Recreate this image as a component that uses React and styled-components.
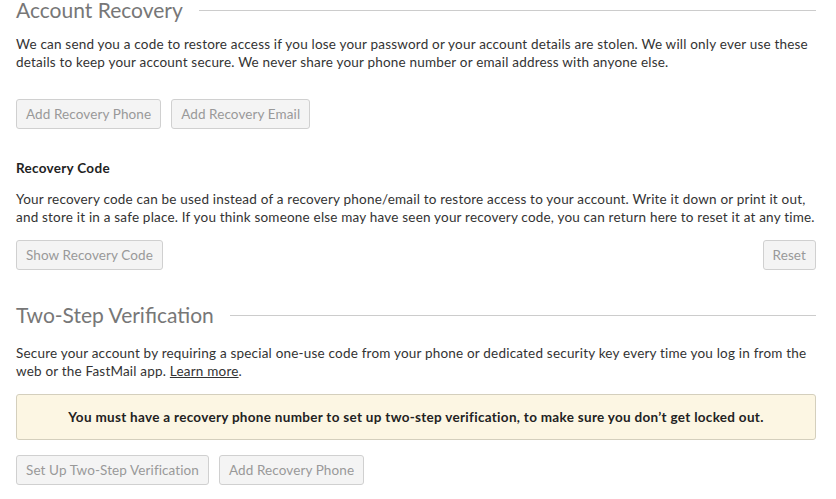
import React from "react";
import styled, { createGlobalStyle } from "styled-components";

const GlobalStyle = createGlobalStyle`
  body {
    margin: 0;
    background: #fff;
    font-family: Lato, "Liberation Sans", sans-serif;
    color: #333;
  }
`;

const Page = styled.div`
  width: 800px;
  padding: 0 20px 0 16px;
`;

const Section = styled.section`
  margin-bottom: ${(p) => p.$gap || 0}px;
`;

const HeaderRow = styled.div`
  display: flex;
  align-items: center;
  gap: 16px;
  height: 20px;
`;

const Title = styled.h2`
  margin: 0;
  font-size: 21px;
  line-height: 20px;
  font-weight: 400;
  color: #777;
  white-space: nowrap;
`;

const Rule = styled.div`
  flex: 1;
  height: 1px;
  background: #ccc;
`;

const Text = styled.p`
  margin: ${(p) => p.$top || 0}px 0 0;
  font-size: 13.5px;
  letter-spacing: 0.2px;
  line-height: 18px;
  color: #333;
`;

const SubTitle = styled.h3`
  margin: 0;
  font-size: 13.5px;
  letter-spacing: 0.3px;
  font-weight: 700;
  line-height: 18px;
  color: #222;
`;

const ButtonRow = styled.div`
  display: flex;
  gap: 10px;
  margin-top: ${(p) => p.$top || 0}px;
  justify-content: ${(p) => (p.$spread ? "space-between" : "flex-start")};
`;

const Group = styled.div`
  display: flex;
  gap: 10px;
`;

const Button = styled.button`
  height: 30px;
  padding: 0 9px;
  font-family: inherit;
  font-size: 13.5px;
  letter-spacing: 0.1px;
  color: #999;
  background: #f4f4f4;
  border: 1px solid #d0d0d0;
  border-radius: 3px;
`;

const LinkText = styled.a`
  color: #333;
  text-decoration: underline;
`;

const Notice = styled.div`
  margin-top: 14px;
  height: 46px;
  display: flex;
  align-items: center;
  justify-content: center;
  background: #fcf6e3;
  border: 1px solid #d4cfbd;
  border-radius: 3px;
  font-size: 13.5px;
  letter-spacing: 0.3px;
  font-weight: 700;
  color: #222;
  box-sizing: border-box;
`;

const App = () => {
  return (
    <>
      <GlobalStyle />
      <Page>
        <Section $gap={30}>
          <HeaderRow>
            <Title>Account Recovery</Title>
            <Rule />
          </HeaderRow>
          <Text $top={15}>
            We can send you a code to restore access if you lose your password or your account details are stolen. We will only ever use these details to keep your account secure. We never share your phone number or email address with anyone else.
          </Text>
          <ButtonRow $top={28}>
            <Button>Add Recovery Phone</Button>
            <Button>Add Recovery Email</Button>
          </ButtonRow>
        </Section>

        <Section $gap={35}>
          <SubTitle>Recovery Code</SubTitle>
          <Text $top={13}>
            Your recovery code can be used instead of a recovery phone/email to restore access to your account. Write it down or print it out, and store it in a safe place. If you think someone else may have seen your recovery code, you can return here to reset it at any time.
          </Text>
          <ButtonRow $top={14} $spread>
            <Button>Show Recovery Code</Button>
            <Button>Reset</Button>
          </ButtonRow>
        </Section>

        <Section>
          <HeaderRow>
            <Title>Two-Step Verification</Title>
            <Rule />
          </HeaderRow>
          <Text $top={19}>
            Secure your account by requiring a special one-use code from your phone or dedicated security key every time you log in from the web or the FastMail app. <LinkText>Learn more</LinkText>.
          </Text>
          <Notice>
            You must have a recovery phone number to set up two-step verification, to make sure you don’t get locked out.
          </Notice>
          <ButtonRow $top={15}>
            <Group>
              <Button>Set Up Two-Step Verification</Button>
              <Button>Add Recovery Phone</Button>
            </Group>
          </ButtonRow>
        </Section>
      </Page>
    </>
  );
};

export default App;
